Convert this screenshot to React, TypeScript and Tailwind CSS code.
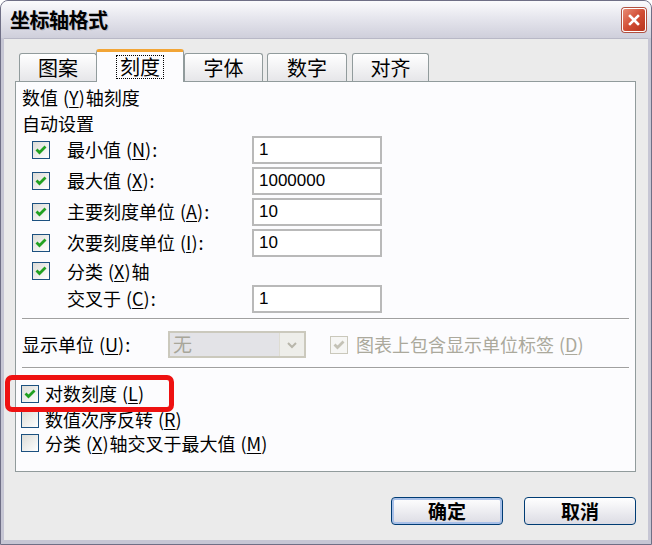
import type { ReactNode } from "react";

const cjk = "font-['Noto_Sans_CJK_SC',sans-serif]";

function Check({ checked, disabled }: { checked?: boolean; disabled?: boolean }) {
  return (
    <span
      className={
        disabled
          ? "w-[18px] h-[18px] shrink-0 border border-[#cac8bb] bg-[#f6f6f4] flex items-center justify-center"
          : "w-[18px] h-[18px] shrink-0 border border-[#1c5180] bg-gradient-to-br from-[#dcdcd7] to-white flex items-center justify-center"
      }
    >
      {checked && (
        <svg width="12" height="12" viewBox="0 0 12 12">
          <path
            d="M1.5 5.5 L4.5 8.5 L10.5 2.5"
            stroke={disabled ? "#c4c2b6" : "#21a121"}
            strokeWidth="2.8"
            fill="none"
          />
        </svg>
      )}
    </span>
  );
}

// accelerator key, e.g. (N) with underlined letter
function Key({ k }: { k: string }) {
  return (
    <span className="ml-[5px] mr-[1px]">
      (<span className="underline underline-offset-2">{k}</span>)
    </span>
  );
}

function Field({ value }: { value: string }) {
  return (
    <div className="w-[130px] h-[28px] border-2 border-[#b9b9b9] bg-white flex items-center pl-[5px] font-['Liberation_Sans',sans-serif] text-[17px] text-black">
      {value}
    </div>
  );
}

function Row({ label, value, checked = true, noBox, h = "h-[31px]" }: { label: ReactNode; value?: string; checked?: boolean; noBox?: boolean; h?: string }) {
  return (
    <div className={`flex items-center ${h}`}>
      <div className="w-[236px] flex items-center pl-[16px] gap-[17px]">
        {noBox ? <span className="w-[18px] h-[18px]" /> : <Check checked={checked} />}
        <span>{label}</span>
      </div>
      {value !== undefined && <Field value={value} />}
    </div>
  );
}

const tabs = [
  { label: "图案", cls: "ml-[4px] w-[78px] h-[28px]" },
  { label: "刻度", cls: "w-[88px] h-[33px]", active: true },
  { label: "字体", cls: "ml-[1px] w-[79px] h-[28px]" },
  { label: "数字", cls: "ml-[4px] w-[80px] h-[28px]" },
  { label: "对齐", cls: "ml-[5px] w-[77px] h-[28px]" },
];

export default function App() {
  return (
    <div className={`w-[652px] h-[545px] bg-[#c6c6d4] border border-[#6f6f86] rounded-t-[8px] flex flex-col overflow-hidden ${cjk} text-black`}>
      {/* Title bar */}
      <div className="h-[37px] shrink-0 bg-gradient-to-b from-[#fbfbfd] via-[#e4e4ec] to-[#cfcfdb] flex items-center justify-between pl-[9px] pr-[5px]">
        <span className="text-[20px] font-bold tracking-[-0.5px] [text-shadow:1px_1px_0_#b8b8c4]">坐标轴格式</span>
        <div className="w-[24px] h-[24px] rounded-[3px] border border-white bg-gradient-to-br from-[#e88a74] via-[#d24e35] to-[#b8331c] flex items-center justify-center shadow-[0_0_0_1px_#b05040]">
          <svg width="12" height="12" viewBox="0 0 12 12">
            <path d="M2 2 L10 10 M10 2 L2 10" stroke="white" strokeWidth="2.6" strokeLinecap="square" />
          </svg>
        </div>
      </div>

      {/* Body */}
      <div className="flex-1 mx-[3px] mb-[4px] bg-[#ebebeb] border-t border-[#b8b8c6] flex flex-col pl-[11px] pr-[12px]">
        {/* Tabs */}
        <div className="flex items-end h-[43px] pt-[10px] relative z-10 -mb-[1px]">
          {tabs.map((t) =>
            t.active ? (
              <div
                key={t.label}
                className={`${t.cls} -mx-[1px] bg-[#fcfcfe] border border-[#919b9c] border-b-0 border-t-[3px] border-t-[#f2a536] rounded-t-[3px] flex items-center justify-center text-[20px]`}
              >
                <span className="border border-dotted border-black px-[3px] leading-[22px]">{t.label}</span>
              </div>
            ) : (
              <div
                key={t.label}
                className={`${t.cls} mb-[1px] bg-gradient-to-b from-white to-[#e6e6e9] border border-[#919b9c] border-b-0 rounded-t-[3px] flex items-center justify-center text-[20px]`}
              >
                {t.label}
              </div>
            )
          )}
        </div>

        {/* Panel */}
        <div className="h-[391px] bg-[#fcfcfe] border border-[#919b9c] flex flex-col text-[18px]">
          <div className="h-[22px] mt-[4px] pl-[6px] flex items-center">数值<Key k="Y" />轴刻度</div>
          <div className="h-[22px] mt-[4px] pl-[6px] flex items-center">自动设置</div>

          <Row label={<>最小值<Key k="N" />:</>} value="1" />
          <Row label={<>最大值<Key k="X" />:</>} value="1000000" />
          <Row label={<>主要刻度单位<Key k="A" />:</>} value="10" />
          <Row label={<>次要刻度单位<Key k="I" />:</>} value="10" />
          <Row label={<>分类<Key k="X" />轴</>} h="h-[26px]" />
          <Row label={<>交叉于<Key k="C" />:</>} value="1" noBox h="h-[29px]" />

          <div className="mt-[5px] mx-[6px] h-[2px] border-t border-[#a0a0a0] border-b border-b-white" />

          <div className="mt-[11px] h-[27px] flex items-center pl-[6px]">
            <span className="w-[146px]">显示单位<Key k="U" />:</span>
            <div className="w-[138px] h-[27px] border-2 border-[#cbc9bd] bg-[#e3e3e7] flex items-center justify-between">
              <span className="pl-[3px] text-[#a8a69a] text-[19px]">无</span>
              <div className="w-[25px] h-[23px] bg-[#eeeeea] border-l border-[#dedcd2] flex items-center justify-center">
                <svg width="12" height="8" viewBox="0 0 12 8">
                  <path d="M2 2 L6 6 L10 2" stroke="#b8b6aa" strokeWidth="2" fill="none" />
                </svg>
              </div>
            </div>
            <div className="ml-[24px] flex items-center gap-[8px] text-[#aba99c]">
              <Check checked disabled />
              <span>图表上包含显示单位标签<Key k="D" /></span>
            </div>
          </div>

          <div className="mt-[9px] mx-[6px] h-[2px] border-t border-[#a0a0a0] border-b border-b-white" />

          <div className="mt-[12px] pl-[5px] flex flex-col">
            <div className="relative h-[25px] flex items-center gap-[6px]">
              <Check checked />
              <span>对数刻度<Key k="L" /></span>
              <div className="absolute -left-[16px] -top-[6px] w-[169px] h-[37px] border-[5px] border-[#ee1111] rounded-[7px] z-10" />
            </div>
            <div className="h-[24px] mt-[1px] flex items-center gap-[6px]">
              <Check />
              <span>数值次序反转<Key k="R" /></span>
            </div>
            <div className="h-[24px] flex items-center gap-[6px]">
              <Check />
              <span>分类<Key k="X" />轴交叉于最大值<Key k="M" /></span>
            </div>
          </div>
        </div>

        {/* Buttons */}
        <div className="mt-[25px] flex justify-end gap-[21px] text-[19px] font-semibold">
          <button className="w-[112px] h-[28px] rounded-[4px] border border-[#003c74] bg-gradient-to-b from-white to-[#dcdce4] shadow-[inset_0_0_0_2px_#a8c0e8] flex items-center justify-center">
            确定
          </button>
          <button className="w-[112px] h-[28px] rounded-[4px] border border-[#003c74] bg-gradient-to-b from-white to-[#dcdce4] flex items-center justify-center">
            取消
          </button>
        </div>
      </div>
    </div>
  );
}
